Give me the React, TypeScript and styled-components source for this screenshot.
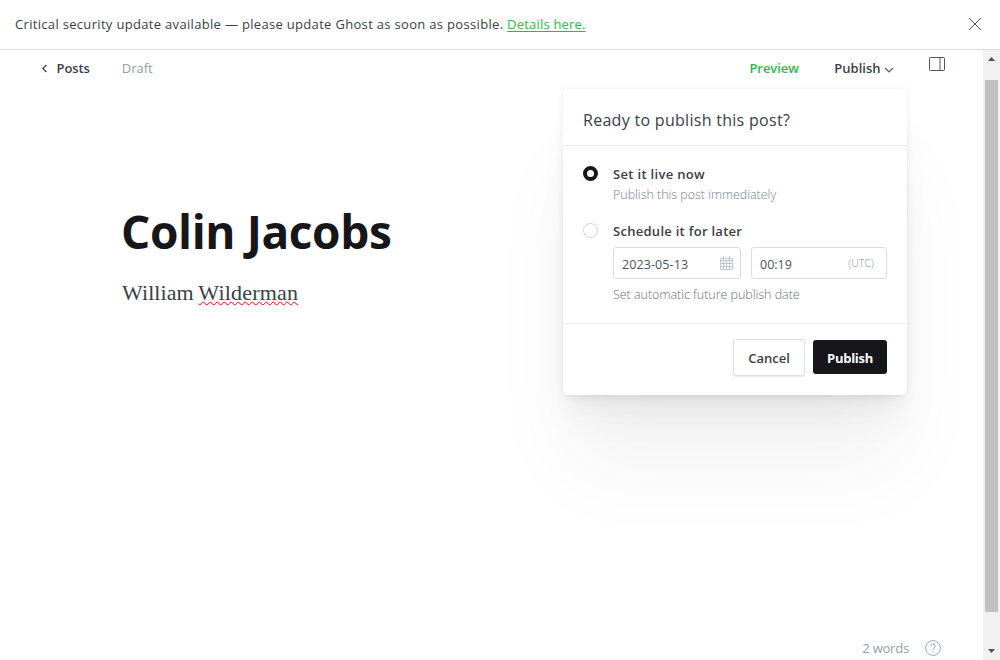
import React from 'react';
import styled, { createGlobalStyle } from 'styled-components';

const GlobalStyle = createGlobalStyle`
  * { box-sizing: border-box; }
  body { margin: 0; background: #fff; overflow: hidden; font-family: "Open Sans", "Noto Sans", sans-serif; color: #394047; }
  button, input { font-family: inherit; }
`;

const Label = styled.span<{ $size?: number; $weight?: number; $color?: string; $spacing?: number; $line?: number }>`
  font-size: ${p => p.$size ?? 13}px;
  font-weight: ${p => p.$weight ?? 400};
  color: ${p => p.$color ?? '#394047'};
  letter-spacing: ${p => p.$spacing ?? 0}px;
  line-height: ${p => p.$line ?? 20}px;
  white-space: nowrap;
`;

const Screen = styled.div`
  display: flex;
  flex-direction: column;
  width: 1000px;
  height: 660px;
`;

const Banner = styled.div`
  display: flex;
  justify-content: space-between;
  align-items: center;
  height: 50px;
  padding: 0 18px 1px 15px;
  border-bottom: 1px solid #dddedf;
`;

const DetailsLink = styled.a`
  color: #2bba3c;
  letter-spacing: 0.2px;
  text-decoration: underline;
  text-underline-offset: 2px;
  text-decoration-thickness: 1px;
`;

const Body = styled.div`
  display: flex;
  flex: 1;
  min-height: 0;
`;

const Editor = styled.main`
  position: relative;
  display: flex;
  flex-direction: column;
  flex: 1;
`;

const Toolbar = styled.header`
  display: flex;
  justify-content: space-between;
  height: 36px;
  padding: 0 37px 0 41px;
`;

const ToolGroup = styled.div<{ $gap: number }>`
  display: flex;
  align-items: center;
  gap: ${p => p.$gap}px;
`;

const Chevron = styled.svg`
  margin-top: 3px;
`;

const PanelToggle = styled.div`
  display: flex;
  align-self: flex-start;
  padding-top: 6px;
`;

const Canvas = styled.article`
  display: flex;
  flex-direction: column;
  flex: 1;
  padding: 111px 0 0 121px;
`;

const Title = styled.h1`
  margin: 0;
  font-size: 46px;
  line-height: 68px;
  font-weight: 700;
  letter-spacing: -0.4px;
  color: #15171a;
`;

const Excerpt = styled.p`
  margin: 15px 0 0 1px;
  font-family: "Liberation Serif", serif;
  font-size: 22px;
  line-height: 26px;
  letter-spacing: 0.08px;
  word-spacing: -1px;
  color: #394047;
`;

const Misspelled = styled.span`
  letter-spacing: 0.2px;
  text-decoration: underline wavy #f00 1.3px;
  text-decoration-skip-ink: none;
  text-underline-offset: 1px;
`;

const StatusBar = styled.footer`
  display: flex;
  justify-content: flex-end;
  align-items: center;
  gap: 16px;
  height: 24px;
  padding-right: 42px;
`;

const Scrollbar = styled.div`
  display: flex;
  flex-direction: column;
  align-items: center;
  justify-content: space-between;
  width: 17px;
  padding: 7px 0 7px;
  background: #f1f1f1;
`;

const Thumb = styled.div`
  width: 13px;
  height: 532px;
  margin: 19px 0 auto;
  background: #c1c1c1;
`;

const Popover = styled.section`
  position: absolute;
  top: 39px;
  left: 563px;
  width: 344px;
  height: 306px;
  display: flex;
  flex-direction: column;
  border-radius: 5px;
  background: #fff;
  box-shadow:
    0 0 7px rgba(0, 0, 0, 0.08),
    0 5.1px 5.3px -5px rgba(0, 0, 0, 0.02),
    0 9.5px 10px -5px rgba(0, 0, 0, 0.024),
    0 17px 17.9px -5px rgba(0, 0, 0, 0.03),
    0 31.8px 33.4px -5px rgba(0, 0, 0, 0.035),
    0 76px 80px -5px rgba(0, 0, 0, 0.05);
`;

const PopoverHeader = styled.div`
  display: flex;
  align-items: center;
  height: 57px;
  padding: 5px 20px 0;
  border-bottom: 1px solid #e8eaeb;
`;

const Options = styled.div`
  display: flex;
  flex-direction: column;
  gap: 16px;
  flex: 1;
  padding: 18px 20px 0;
`;

const Option = styled.div`
  display: flex;
  gap: 15px;
`;

const OptionBody = styled.div`
  display: flex;
  flex-direction: column;
`;

const Radio = styled.span<{ $checked?: boolean }>`
  width: 15px;
  height: 15px;
  margin-top: 2px;
  border-radius: 50%;
  border: ${p => (p.$checked ? '4px solid #15171a' : '1px solid #ccd3d9')};
`;

const Fields = styled.div`
  display: flex;
  gap: 10px;
  margin: 6px 0 5px;
`;

const Hint = styled(Label)`
  margin-top: 1px;
  font-weight: 300;
`;

const Field = styled.div<{ $width: number; $end: number }>`
  display: flex;
  align-items: center;
  justify-content: space-between;
  width: ${p => p.$width}px;
  height: 32px;
  padding: 0 ${p => p.$end}px 0 8px;
  border: 1px solid #dadddf;
  border-radius: 3px;
`;

const FieldValue = styled(Label)`
  padding-top: 3px;
`;

const PopoverFooter = styled.div`
  display: flex;
  justify-content: flex-end;
  align-items: flex-start;
  gap: 8px;
  height: 72px;
  padding: 15px 20px 0;
  border-top: 1px solid #e8eaeb;
`;

const Button = styled.button<{ $primary?: boolean }>`
  width: ${p => (p.$primary ? 74 : 72)}px;
  height: ${p => (p.$primary ? 34 : 37)}px;
  margin-top: ${p => (p.$primary ? 1 : 0)}px;
  padding: ${p => (p.$primary ? '1px 0 0' : '0')};
  border: ${p => (p.$primary ? 'none' : '1px solid #dde1e5')};
  border-radius: 3px;
  box-shadow: ${p => (p.$primary ? 'none' : '0 1px 1px rgba(100, 120, 140, 0.15)')};
  background: ${p => (p.$primary ? '#15171a' : '#fff')};
  color: ${p => (p.$primary ? '#fff' : '#394047')};
  font-size: 13px;
  font-weight: ${p => (p.$primary ? 700 : 600)};
  letter-spacing: ${p => (p.$primary ? -0.3 : 0)}px;
`;

export default function App() {
  return (
    <Screen>
      <GlobalStyle />
      <Banner>
        <Label $spacing={0.32}>
          Critical security update available — please update Ghost as soon as possible.{' '}
          <DetailsLink>Details here.</DetailsLink>
        </Label>
        <svg width="14" height="14" viewBox="0 0 14 14" fill="none" stroke="#50585f">
          <path d="M1 1l12 12M13 1L1 13" />
        </svg>
      </Banner>
      <Body>
        <Editor>
          <Toolbar>
            <ToolGroup $gap={32}>
              <ToolGroup $gap={8.5}>
                <svg width="7" height="9" viewBox="0 0 7 9" fill="none" stroke="#394047" strokeWidth="1.2">
                  <path d="M5.5 1L1.8 4.5l3.7 3.5" />
                </svg>
                <Label $weight={600} $spacing={-0.1}>Posts</Label>
              </ToolGroup>
              <Label $color="#8f9fad">Draft</Label>
            </ToolGroup>
            <ToolGroup $gap={35.5}>
              <Label $weight={600} $color="#2bba3c" $spacing={-0.05}>Preview</Label>
              <ToolGroup $gap={3}>
                <Label $weight={600}>Publish</Label>
                <Chevron width="10" height="6" viewBox="0 0 10 6" fill="none" stroke="#50585f" strokeWidth="1.1">
                  <path d="M1 1l4 4 4-4" />
                </Chevron>
              </ToolGroup>
              <PanelToggle>
                <svg width="17" height="16" viewBox="0 0 17 16" fill="none" stroke="#50585f">
                  <rect x="0.5" y="1.5" width="15" height="13" rx="0.8" />
                  <path d="M11 1.5v13" />
                </svg>
              </PanelToggle>
            </ToolGroup>
          </Toolbar>
          <Canvas>
            <Title>Colin Jacobs</Title>
            <Excerpt>
              William <Misspelled>Wilderman</Misspelled>
            </Excerpt>
          </Canvas>
          <StatusBar>
            <Label $color="#8f9fad" $spacing={-0.2}>2 words</Label>
            <svg width="16" height="16" viewBox="0 0 16 16" fill="none" stroke="#9aa8b8">
              <circle cx="8" cy="8" r="7.4" />
              <path d="M5.8 6.1a2.2 2.2 0 1 1 3.2 2c-.7.4-1 .8-1 1.7" />
              <path d="M8 11.2v1.1" />
            </svg>
          </StatusBar>
          <Popover>
            <PopoverHeader>
              <Label $size={16} $spacing={0.29}>Ready to publish this post?</Label>
            </PopoverHeader>
            <Options>
              <Option>
                <Radio $checked />
                <OptionBody>
                  <Label $weight={600} $spacing={0.32}>Set it live now</Label>
                  <Hint $size={12.5} $color="#73828f" $spacing={-0.03}>Publish this post immediately</Hint>
                </OptionBody>
              </Option>
              <Option>
                <Radio />
                <OptionBody>
                  <Label $weight={600} $spacing={0.28}>Schedule it for later</Label>
                  <Fields>
                    <Field $width={128} $end={7}>
                      <FieldValue $size={12.5} $spacing={0.1} $color="#4a535b">2023-05-13</FieldValue>
                      <svg width="13" height="14" viewBox="0 0 13 14" fill="none" stroke="#b4bcc8">
                        <path d="M.5 2.5h12v11H.5zM0 4.5h13M3.5 0v4M9.5 0v4M3.5 5v8M6.5 5v8M9.5 5v8M1 7.5h11M1 10.5h11" strokeWidth="0.8" />
                      </svg>
                    </Field>
                    <Field $width={136} $end={12}>
                      <FieldValue $size={12.5} $color="#4a535b">00:19</FieldValue>
                      <Label $size={10.5} $weight={300} $color="#8290a0" $spacing={0.1}>(UTC)</Label>
                    </Field>
                  </Fields>
                  <Hint $size={12.5} $color="#5f6f7d" $spacing={-0.03}>Set automatic future publish date</Hint>
                </OptionBody>
              </Option>
            </Options>
            <PopoverFooter>
              <Button>Cancel</Button>
              <Button $primary>Publish</Button>
            </PopoverFooter>
          </Popover>
        </Editor>
        <Scrollbar>
          <svg width="7" height="4" viewBox="0 0 7 4" fill="#505050">
            <path d="M3.5 0L7 4H0z" />
          </svg>
          <Thumb />
          <svg width="7" height="4" viewBox="0 0 7 4" fill="#505050">
            <path d="M0 0h7L3.5 4z" />
          </svg>
        </Scrollbar>
      </Body>
    </Screen>
  );
}
